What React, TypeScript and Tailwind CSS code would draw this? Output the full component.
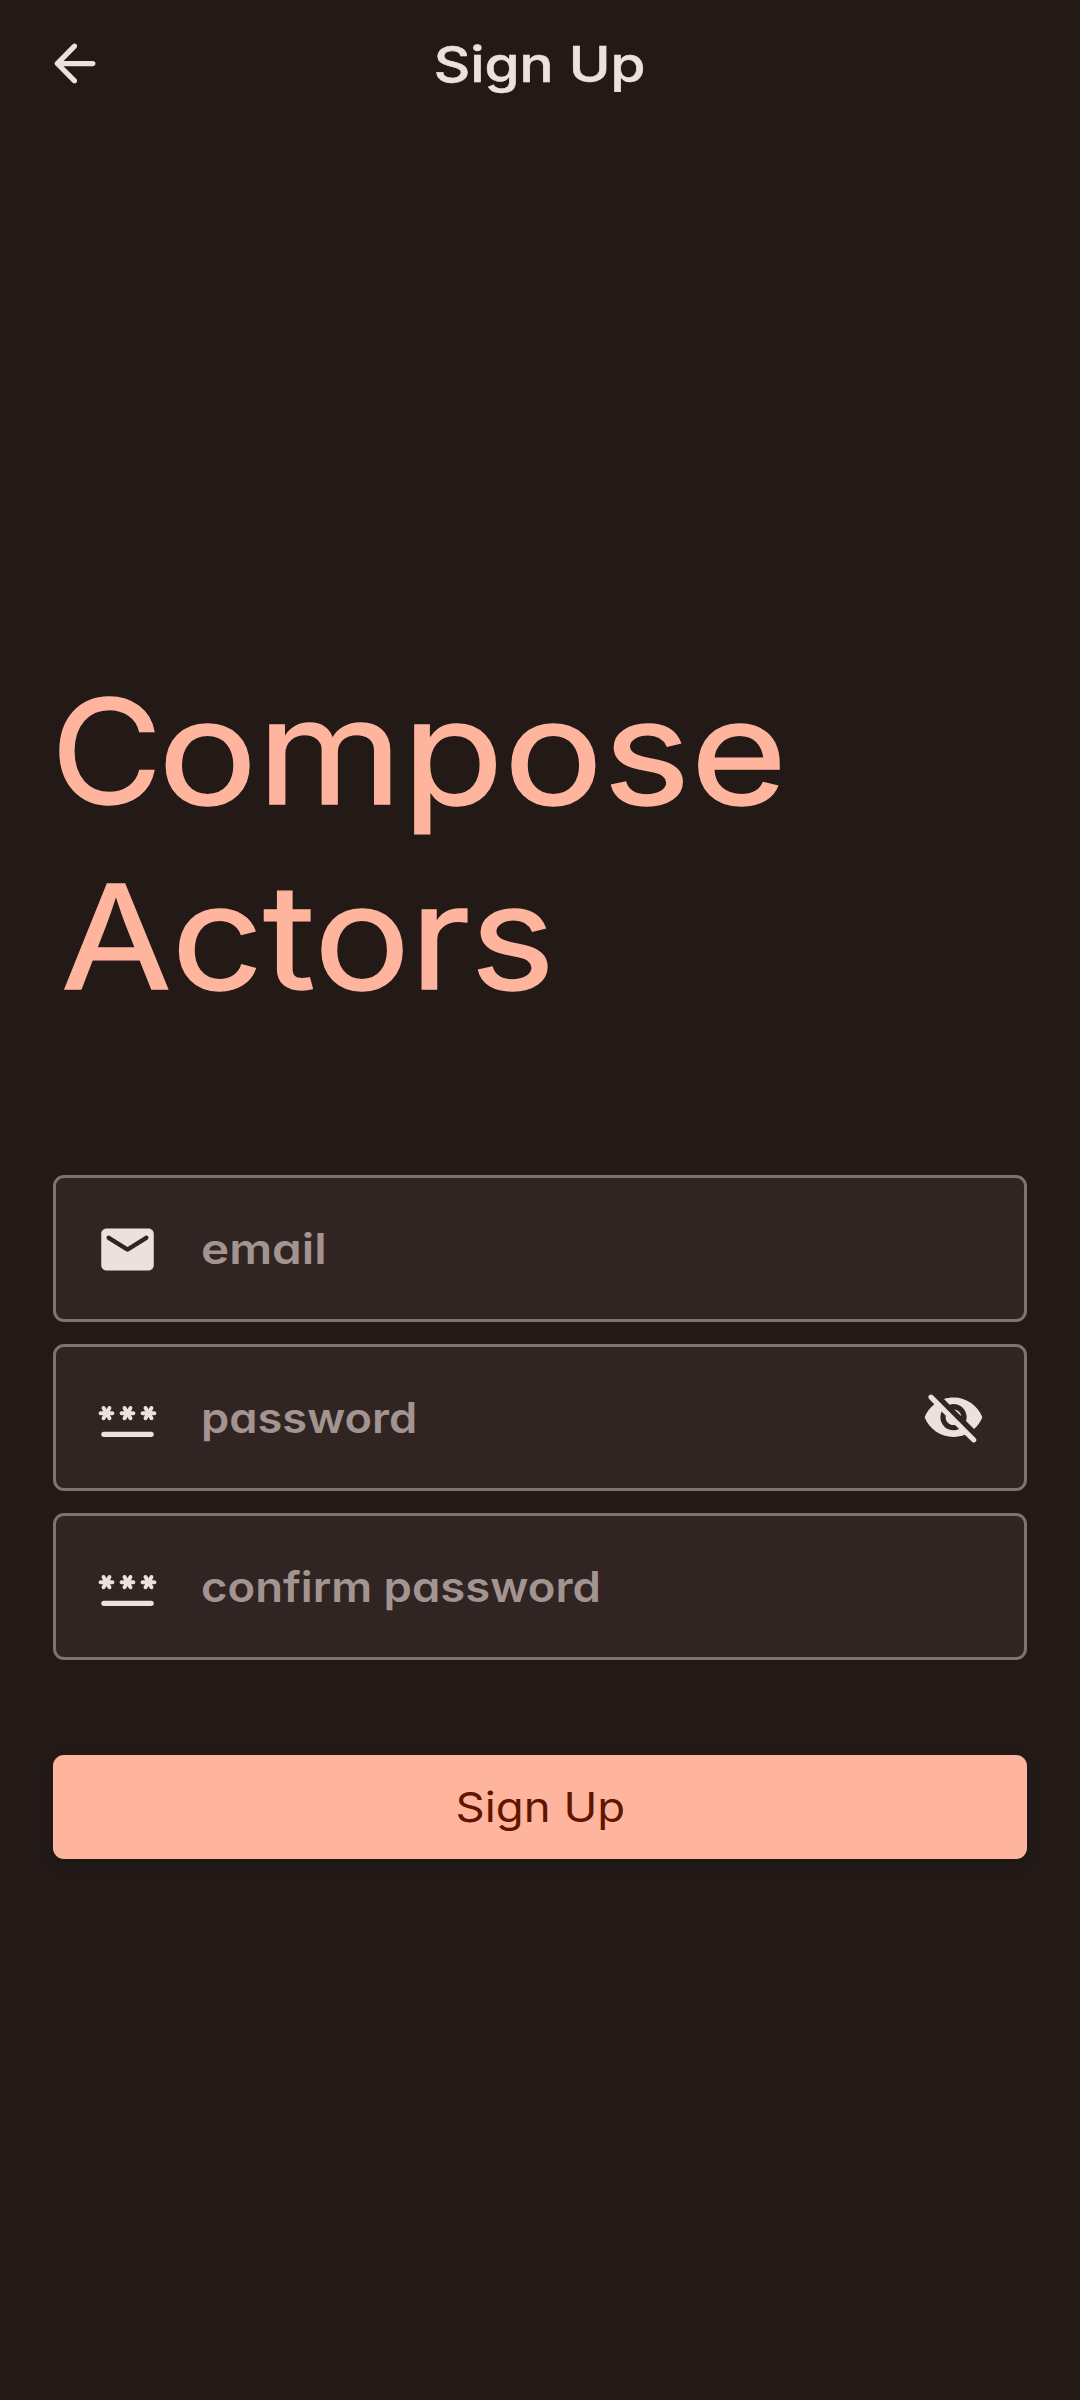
import type { ReactNode } from 'react';

const paths = {
  back: 'M19 11H7.83l4.88-4.88c.39-.39.39-1.03 0-1.42-.39-.39-1.02-.39-1.41 0l-6.59 6.59c-.39.39-.39 1.02 0 1.41l6.59 6.59c.39.39 1.02.39 1.41 0 .39-.39.39-1.02 0-1.41L7.83 13H19c.55 0 1-.45 1-1s-.45-1-1-1z',
  mail: 'M20 4H4c-1.1 0-2 .9-2 2v12c0 1.1.9 2 2 2h16c1.1 0 2-.9 2-2V6c0-1.1-.9-2-2-2zm-.4 4.25l-7.07 4.42c-.32.2-.74.2-1.06 0L4.4 8.25c-.25-.16-.4-.43-.4-.72 0-.67.73-1.07 1.3-.72L12 11l6.7-4.19c.57-.35 1.3.05 1.3.72 0 .29-.15.56-.4.72z',
  star: 'M2.5 12.57c.36.21.82.08 1.03-.28l.47-.82.48.83c.21.36.67.48 1.03.28.36-.21.48-.66.28-1.02l-.49-.84h.95c.41 0 .75-.34.75-.75s-.34-.75-.75-.75H5.3l.47-.82c.21-.36.09-.82-.27-1.03-.36-.21-.82-.08-1.02.28L4 8.47l-.47-.82c-.21-.36-.67-.49-1.03-.28-.36.21-.49.67-.28 1.03l.47.82h-.94c-.41 0-.75.34-.75.75s.34.75.75.75h.95l-.48.83c-.2.36-.08.82.28 1.02z',
  eyeOff:
    'M12 6.5c2.76 0 5 2.24 5 5 0 .51-.1 1-.24 1.46l3.06 3.06c1.39-1.23 2.49-2.77 3.18-4.53C21.27 7.11 17 4 12 4c-1.27 0-2.49.2-3.64.57l2.17 2.17c.47-.14.96-.24 1.47-.24zM2.71 3.16c-.39.39-.39 1.02 0 1.41l1.97 1.97C3.06 7.83 1.77 9.53 1 11.5 2.73 15.89 7 19 12 19c1.52 0 2.97-.3 4.31-.82l2.72 2.72c.39.39 1.02.39 1.41 0 .39-.39.39-1.02 0-1.41L4.13 3.16c-.39-.39-1.03-.39-1.42 0zM12 16.5c-2.76 0-5-2.24-5-5 0-.77.18-1.5.49-2.14l1.57 1.57c-.03.18-.06.37-.06.57 0 1.66 1.34 3 3 3 .2 0 .38-.03.57-.07L14.14 16c-.65.32-1.37.5-2.14.5zm2.97-5.33c-.15-1.4-1.25-2.49-2.64-2.64l2.64 2.64z',
};

function Icon({ children }: { children: ReactNode }) {
  return (
    <svg viewBox="0 0 24 24" fill="currentColor" className="size-[63px] shrink-0 overflow-visible text-[#ede0dd]">
      {children}
    </svg>
  );
}

function PasswordIcon() {
  return (
    <Icon>
      <rect x="2" y="17" width="20" height="2" rx="1" />
      <path d={paths.star} />
      <path d={paths.star} transform="translate(8 0)" />
      <path d={paths.star} transform="translate(16 0)" />
    </Icon>
  );
}

function Field({ icon, trailing, children }: { icon: ReactNode; trailing?: ReactNode; children: ReactNode }) {
  return (
    <div className="flex h-[147px] items-center rounded-[11px] border-3 border-[#80736f] bg-[#302523] pt-px pr-[39px] pl-10 text-[#a39491]">
      {icon}
      <div className="ml-[42px] flex-1 text-[42px] leading-[50px] font-semibold whitespace-nowrap">{children}</div>
      {trailing}
    </div>
  );
}

export default function App() {
  return (
    <main className="flex h-[2400px] w-[1080px] flex-col bg-[#231a18] font-['Inter',sans-serif] [font-feature-settings:'cv11']">
      <header className="relative flex h-32 items-center justify-center">
        <button className="absolute top-8 left-[43px]" aria-label="Back">
          <Icon>
            <path d={paths.back} />
          </Icon>
        </button>
        <h1 className="text-[50px] font-medium text-[#ede0dd] [-webkit-text-stroke:0.6px_#ede0dd]">
          <span className="inline-block scale-x-[1.13]">Sign Up</span>
        </h1>
      </header>

      <section className="mt-[531px] flex flex-col px-[53px]">
        <h2 className="h-[369px] text-[145px] leading-[185px] font-normal text-[#ffb59d] [-webkit-text-stroke:1.4px_#ffb59d]">
          <span className="-ml-[2px] block whitespace-nowrap">
            <span className="mr-px inline-block origin-left scale-x-[1.05]">C</span>
            <span className="inline-block origin-left scale-x-[1.142]">ompose</span>
          </span>
          <span className="ml-[8px] block w-fit origin-left scale-x-[1.105]">Actors</span>
        </h2>

        <div className="mt-[147px] flex flex-col gap-[22px]">
          <Field
            icon={
              <Icon>
                <path d={paths.mail} />
              </Icon>
            }
          >
            <span className="inline-block origin-left scale-x-[1.135]">email</span>
          </Field>
          <Field
            icon={<PasswordIcon />}
            trailing={
              <Icon>
                <path d={paths.eyeOff} />
              </Icon>
            }
          >
            <span className="inline-block origin-left scale-x-[1.077]">password</span>
          </Field>
          <Field icon={<PasswordIcon />}>
            <span className="inline-block origin-left scale-x-[1.082]">confirm password</span>
          </Field>
        </div>

        <button className="mt-[95px] flex h-[104px] items-center justify-center rounded-[11px] bg-[#ffb59d] pt-0.5 text-[41px] text-[#5f1500] shadow-[0_5px_10px_rgba(20,24,18,0.5)]">
          <span className="inline-block scale-x-[1.11]">Sign Up</span>
        </button>
      </section>
    </main>
  );
}
